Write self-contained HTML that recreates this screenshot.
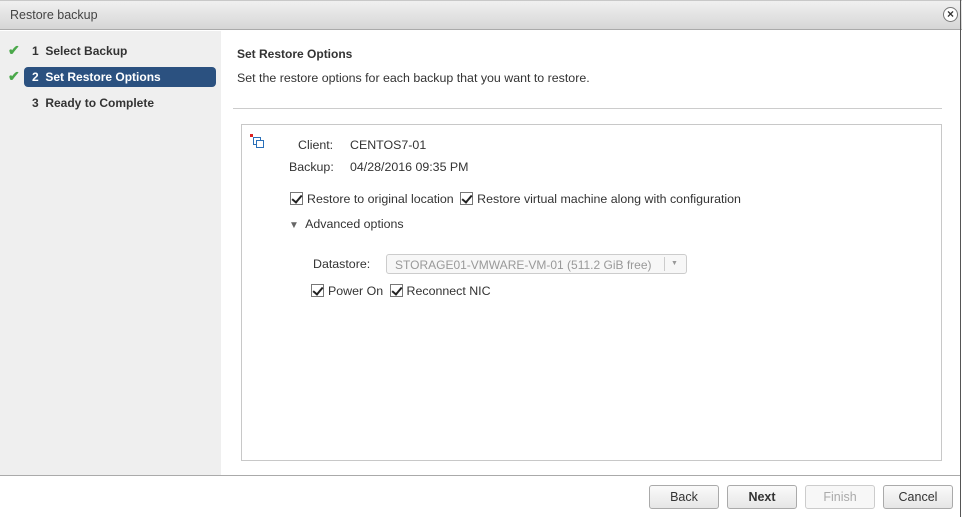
<!DOCTYPE html><html><head><style>
*{box-sizing:border-box;margin:0;padding:0}
body{width:962px;height:517px;position:relative;overflow:hidden;background:#fff;font-family:"Liberation Sans",Arial,sans-serif;font-size:12px;color:#333}
.a{position:absolute;white-space:nowrap}
.t{left:0;top:0;width:962px;height:30px;background:linear-gradient(#f0f0f0,#d6d6d6);border-bottom:1px solid #aaa;border-top:1px solid #c8c8c8}
.cb{display:inline-block;width:13px;height:13px;border:1px solid #777;background:#fff;vertical-align:-2px;position:relative;margin-right:4px}
.cb:after{content:"";position:absolute;left:3px;top:0px;width:4px;height:8px;border:solid #222;border-width:0 2px 2px 0;transform:rotate(40deg)}
.btn{position:absolute;top:485px;height:24px;border:1px solid #aaa;border-radius:3px;background:linear-gradient(#fafafa,#e6e6e6);text-align:center;line-height:22px;font-size:12.5px}
.ck{color:#4aa84a;font-size:14px;font-weight:bold}
.c{font-size:12.4px}
</style></head><body>
<div class="a t"></div>
<div class="a" style="left:10px;top:8px;font-size:12.5px;color:#444">Restore backup</div>
<div class="a" style="left:943px;top:7px;width:15px;height:15px;border:1px solid #777;border-radius:50%;background:#fff;font-size:12px;line-height:12px;text-align:center;font-weight:bold">×</div>
<div class="a" style="left:960px;top:0;width:1px;height:517px;background:#555"></div>
<div class="a" style="left:0;top:31px;width:221px;height:444px;background:#efefef"></div>
<div class="a ck" style="left:8px;top:42px">✔</div>
<div class="a" style="left:32px;top:44px;font-weight:bold">1&nbsp; Select Backup</div>
<div class="a ck" style="left:8px;top:68px">✔</div>
<div class="a" style="left:24px;top:67px;width:192px;height:20px;background:#2b5180;border-radius:4px"></div>
<div class="a" style="left:32px;top:70px;font-weight:bold;color:#fff">2&nbsp; Set Restore Options</div>
<div class="a" style="left:32px;top:96px;font-weight:bold">3&nbsp; Ready to Complete</div>
<div class="a" style="left:237px;top:47px;font-weight:bold">Set Restore Options</div>
<div class="a c" style="left:237px;top:71px">Set the restore options for each backup that you want to restore.</div>
<div class="a" style="left:233px;top:108px;width:709px;height:1px;background:#ccc"></div>
<div class="a" style="left:241px;top:124px;width:701px;height:337px;border:1px solid #c8c8c8"></div>
<svg class="a" style="left:250px;top:134px" width="14" height="14"><rect x="0" y="0" width="3" height="3" fill="#d22"/><rect x="3.5" y="3.5" width="7" height="7" fill="none" stroke="#2a6fb8"/><rect x="6.5" y="6.5" width="7" height="7" fill="#fff" stroke="#2a6fb8"/></svg>
<div class="a c" style="left:298px;top:138px">Client:</div>
<div class="a c" style="left:350px;top:138px">CENTOS7-01</div>
<div class="a c" style="left:289px;top:160px">Backup:</div>
<div class="a c" style="left:350px;top:160px">04/28/2016 09:35 PM</div>
<div class="a c" style="left:290px;top:192px"><span class="cb"></span>Restore to original location <span class="cb" style="margin-left:3px"></span>Restore virtual machine along with configuration</div>
<div class="a c" style="left:289px;top:217px"><span style="font-size:10px;color:#666">▼</span>&nbsp; Advanced options</div>
<div class="a c" style="left:313px;top:257px">Datastore:</div>
<div class="a" style="left:386px;top:254px;width:301px;height:20px;border:1px solid #ccc;border-radius:3px;background:#f7f7f7;color:#999;padding:3px 8px">STORAGE01-VMWARE-VM-01 (511.2 GiB free)</div>
<div class="a" style="left:664px;top:257px;width:1px;height:14px;background:#ccc"></div>
<div class="a" style="left:671px;top:260px;font-size:7px;color:#999">▼</div>
<div class="a c" style="left:311px;top:284px"><span class="cb"></span>Power On <span class="cb" style="margin-left:3px"></span>Reconnect NIC</div>
<div class="a" style="left:0;top:475px;width:960px;height:1px;background:#aaa"></div>
<div class="btn" style="left:649px;width:70px">Back</div>
<div class="btn" style="left:727px;width:70px;font-weight:bold">Next</div>
<div class="btn" style="left:805px;width:70px;color:#aaa;border-color:#ccc;background:#f7f7f7">Finish</div>
<div class="btn" style="left:883px;width:70px">Cancel</div>
</body></html>
